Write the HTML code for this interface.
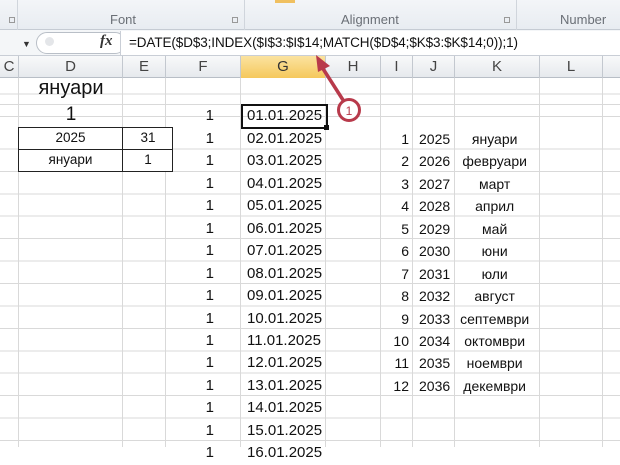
<!DOCTYPE html>
<html><head><meta charset="utf-8"><style>
*{margin:0;padding:0;box-sizing:border-box}
body{width:620px;height:447px;overflow:hidden;background:#fff;font-family:"Liberation Sans","DejaVu Sans",sans-serif;position:relative;color:#111}
.a{position:absolute}
.rib{left:0;top:0;width:620px;height:30px;background:linear-gradient(#f3f5f8,#e8ecf1);border-bottom:1px solid #c5cbd3}
.rl{top:12px;font-size:13px;color:#6a6f76}
.fb{left:0;top:30px;width:620px;height:26px;background:#f4f6f8;border-bottom:1px solid #c9ced6}
.hdr{left:0;top:56px;width:620px;height:22px;background:linear-gradient(#f8f9fa,#e6e9ed);border-bottom:1px solid #b8bec6}
.h{top:56px;height:22px;line-height:22px;text-align:center;font-size:15px;color:#444;border-right:1px solid #c3c8cf}
.grid{left:0;top:78px;width:620px;height:369px;
background-image:repeating-linear-gradient(to bottom,transparent 0,transparent 21.43px,#d9d9d9 21.43px,#d9d9d9 22.43px);
background-position:0 49px;}
.v{top:78px;width:1px;height:369px;background:#d9d9d9}
.c{font-size:14px;height:22px;line-height:22px}
.m{text-align:center}
.dt{font-size:15px}
</style></head><body>
<div class="a rib"></div>
<div class="a" style="left:0;top:0;width:18px;height:30px;border-right:1px solid #d0d5dc"></div>
<div class="a" style="left:244px;top:0;width:1px;height:30px;background:#d0d5dc"></div>
<div class="a" style="left:516px;top:0;width:1px;height:30px;background:#d0d5dc"></div>
<div class="a" style="left:275px;top:0;width:20px;height:3px;background:#f0c060"></div>
<div class="a rl" style="left:110px">Font</div>
<div class="a rl" style="left:341px">Alignment</div>
<div class="a rl" style="left:560px">Number</div>
<div class="a" style="left:9px;top:17px;width:6px;height:6px;border:1px solid #999"></div>
<div class="a" style="left:232px;top:17px;width:6px;height:6px;border:1px solid #999"></div>
<div class="a" style="left:504px;top:17px;width:6px;height:6px;border:1px solid #999"></div>
<div class="a fb"></div>
<div class="a" style="left:22px;top:39px;font-size:9px;color:#333">▼</div>
<div class="a" style="left:36px;top:32px;width:90px;height:22px;border:1px solid #b9bfc7;border-radius:11px;background:#fff"></div>
<div class="a" style="left:45px;top:37px;width:9px;height:9px;border-radius:50%;background:#e4e6e9"></div>
<div class="a" style="left:100px;top:33px;font-size:15px;font-style:italic;font-family:'Liberation Serif',serif;font-weight:bold;color:#333">fx</div>
<div class="a" style="left:120px;top:31px;width:500px;height:24px;background:#fff;border-left:1px solid #c9ced6"></div>
<div class="a" style="left:129px;top:35px;font-size:13.5px;color:#111;letter-spacing:-0.1px">=DATE($D$3;INDEX($I$3:$I$14;MATCH($D$4;$K$3:$K$14;0));1)</div>
<div class="a hdr"></div>
<div class="a h" style="left:0;width:19px">C</div>
<div class="a h" style="left:19px;width:104px">D</div>
<div class="a h" style="left:123px;width:43px">E</div>
<div class="a h" style="left:166px;width:75px">F</div>
<div class="a h" style="left:241px;width:85px;background:linear-gradient(#fbe3a0,#f5c85c);color:#333">G</div>
<div class="a h" style="left:326px;width:55px">H</div>
<div class="a h" style="left:381px;width:32px">I</div>
<div class="a h" style="left:413px;width:42px">J</div>
<div class="a h" style="left:455px;width:85px">K</div>
<div class="a h" style="left:540px;width:63px">L</div>
<div class="a grid"></div>
<div class="a" style="left:0;top:104px;width:620px;height:1px;background:#d9d9d9"></div>
<div class="a v" style="left:18px"></div><div class="a v" style="left:122px"></div><div class="a v" style="left:165px"></div>
<div class="a v" style="left:240px"></div><div class="a v" style="left:325px"></div><div class="a v" style="left:380px"></div>
<div class="a v" style="left:412px"></div><div class="a v" style="left:454px"></div><div class="a v" style="left:539px"></div><div class="a v" style="left:602px"></div>

<div class="a m" style="left:19px;width:104px;top:77px;font-size:20px;line-height:22px">януари</div>
<div class="a m" style="left:19px;width:104px;top:104px;font-size:19px;line-height:22px">1</div>
<div class="a" style="left:18px;top:127px;width:155px;height:45px;border:1px solid #222;background:#fff"></div>
<div class="a" style="left:18px;top:149px;width:155px;height:1px;background:#222"></div>
<div class="a" style="left:122px;top:127px;width:1px;height:45px;background:#222"></div>
<div class="a c m" style="left:19px;width:103px;top:127px;font-size:13.5px">2025</div>
<div class="a c m" style="left:123px;width:50px;top:127px;font-size:13.5px">31</div>
<div class="a c m" style="left:19px;width:103px;top:149px;font-size:13.5px">януари</div>
<div class="a c m" style="left:123px;width:50px;top:149px;font-size:13.5px">1</div>

<div class="a dt" style="left:166px;top:105px;width:160px;line-height:22px">
<span style="display:inline-block;width:48px;text-align:right">1</span><span style="margin-left:33px">01.01.2025</span>
</div>
<div class="a" style="left:241px;top:104px;width:87px;height:25px;border:2px solid #111"></div>
<div class="a" style="left:324px;top:125px;width:5px;height:5px;background:#111"></div>

<div class="a dt" style="left:166px;top:128px;width:160px;line-height:22.43px">
<div><span style="display:inline-block;width:48px;text-align:right">1</span><span style="margin-left:33px">02.01.2025</span></div>
<div><span style="display:inline-block;width:48px;text-align:right">1</span><span style="margin-left:33px">03.01.2025</span></div>
<div><span style="display:inline-block;width:48px;text-align:right">1</span><span style="margin-left:33px">04.01.2025</span></div>
<div><span style="display:inline-block;width:48px;text-align:right">1</span><span style="margin-left:33px">05.01.2025</span></div>
<div><span style="display:inline-block;width:48px;text-align:right">1</span><span style="margin-left:33px">06.01.2025</span></div>
<div><span style="display:inline-block;width:48px;text-align:right">1</span><span style="margin-left:33px">07.01.2025</span></div>
<div><span style="display:inline-block;width:48px;text-align:right">1</span><span style="margin-left:33px">08.01.2025</span></div>
<div><span style="display:inline-block;width:48px;text-align:right">1</span><span style="margin-left:33px">09.01.2025</span></div>
<div><span style="display:inline-block;width:48px;text-align:right">1</span><span style="margin-left:33px">10.01.2025</span></div>
<div><span style="display:inline-block;width:48px;text-align:right">1</span><span style="margin-left:33px">11.01.2025</span></div>
<div><span style="display:inline-block;width:48px;text-align:right">1</span><span style="margin-left:33px">12.01.2025</span></div>
<div><span style="display:inline-block;width:48px;text-align:right">1</span><span style="margin-left:33px">13.01.2025</span></div>
<div><span style="display:inline-block;width:48px;text-align:right">1</span><span style="margin-left:33px">14.01.2025</span></div>
<div><span style="display:inline-block;width:48px;text-align:right">1</span><span style="margin-left:33px">15.01.2025</span></div>
<div><span style="display:inline-block;width:48px;text-align:right">1</span><span style="margin-left:33px">16.01.2025</span></div>
</div>

<div class="a" style="left:381px;top:128px;width:160px;line-height:22.43px;font-size:14px">
<div><span style="display:inline-block;width:28px;text-align:right">1</span><span style="margin-left:10px">2025</span><span style="display:inline-block;width:85px;text-align:center;margin-left:2px">януари</span></div>
<div><span style="display:inline-block;width:28px;text-align:right">2</span><span style="margin-left:10px">2026</span><span style="display:inline-block;width:85px;text-align:center;margin-left:2px">февруари</span></div>
<div><span style="display:inline-block;width:28px;text-align:right">3</span><span style="margin-left:10px">2027</span><span style="display:inline-block;width:85px;text-align:center;margin-left:2px">март</span></div>
<div><span style="display:inline-block;width:28px;text-align:right">4</span><span style="margin-left:10px">2028</span><span style="display:inline-block;width:85px;text-align:center;margin-left:2px">април</span></div>
<div><span style="display:inline-block;width:28px;text-align:right">5</span><span style="margin-left:10px">2029</span><span style="display:inline-block;width:85px;text-align:center;margin-left:2px">май</span></div>
<div><span style="display:inline-block;width:28px;text-align:right">6</span><span style="margin-left:10px">2030</span><span style="display:inline-block;width:85px;text-align:center;margin-left:2px">юни</span></div>
<div><span style="display:inline-block;width:28px;text-align:right">7</span><span style="margin-left:10px">2031</span><span style="display:inline-block;width:85px;text-align:center;margin-left:2px">юли</span></div>
<div><span style="display:inline-block;width:28px;text-align:right">8</span><span style="margin-left:10px">2032</span><span style="display:inline-block;width:85px;text-align:center;margin-left:2px">август</span></div>
<div><span style="display:inline-block;width:28px;text-align:right">9</span><span style="margin-left:10px">2033</span><span style="display:inline-block;width:85px;text-align:center;margin-left:2px">септември</span></div>
<div><span style="display:inline-block;width:28px;text-align:right">10</span><span style="margin-left:10px">2034</span><span style="display:inline-block;width:85px;text-align:center;margin-left:2px">октомври</span></div>
<div><span style="display:inline-block;width:28px;text-align:right">11</span><span style="margin-left:10px">2035</span><span style="display:inline-block;width:85px;text-align:center;margin-left:2px">ноември</span></div>
<div><span style="display:inline-block;width:28px;text-align:right">12</span><span style="margin-left:10px">2036</span><span style="display:inline-block;width:85px;text-align:center;margin-left:2px">декември</span></div>
</div>

<svg class="a" style="left:0;top:0" width="620" height="447">
<line x1="343" y1="100" x2="320" y2="64" stroke="#b83a4b" stroke-width="3.5" stroke-linecap="round"/>
<polygon points="316,55 330,66 318,72" fill="#b83a4b"/>
<circle cx="349" cy="110" r="10.5" fill="#fff" stroke="#b83a4b" stroke-width="3"/>
<text x="349" y="115" font-size="12" text-anchor="middle" fill="#b83a4b" font-family="Liberation Sans">1</text>
</svg>
</body></html>
